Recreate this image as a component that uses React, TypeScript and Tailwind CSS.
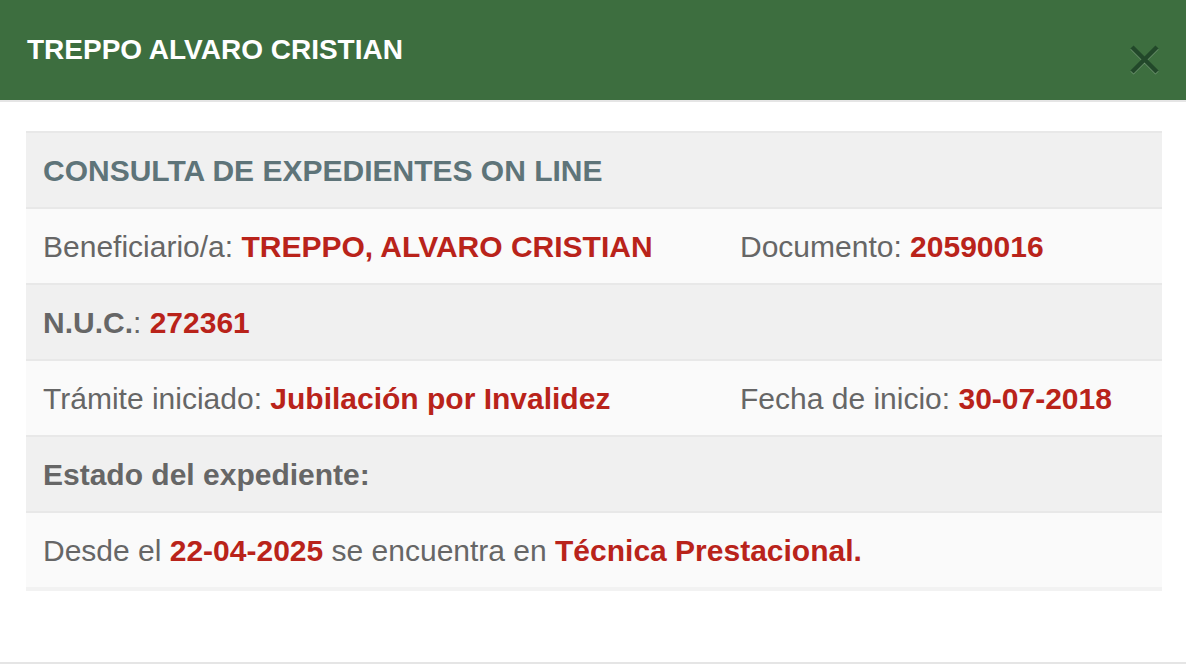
import React from "react";

function Val({ children }: { children: React.ReactNode }) {
  return <span className="font-bold text-[#b9231a]">{children}</span>;
}

export default function App() {
  return (
    <div
      className="w-[1186px] h-[666px] bg-white flex flex-col overflow-hidden"
      style={{ fontFamily: '"Liberation Sans", Arial, Helvetica, sans-serif' }}
    >
      <div className="h-[102px] bg-[#3d6e3f] border-b-2 border-[#e5e5e5] flex items-start justify-between pl-[27px] pr-[25px] shrink-0">
        <h1 className="mt-[33px] text-[28px] leading-[34px] font-bold text-white">TREPPO ALVARO CRISTIAN</h1>
        <button className="mt-[44px] w-[32px] h-[32px] flex items-center justify-center">
          <svg width="32" height="32" viewBox="0 0 32 32">
            <g stroke="#ffffff" strokeOpacity="0.25" strokeWidth="4.5" transform="translate(0,1)">
              <line x1="3" y1="3" x2="28" y2="28" />
              <line x1="28" y1="3" x2="3" y2="28" />
            </g>
            <g stroke="#22482a" strokeWidth="4.5">
              <line x1="3" y1="3" x2="28" y2="28" />
              <line x1="28" y1="3" x2="3" y2="28" />
            </g>
          </svg>
        </button>
      </div>

      <div className="flex-1 pl-[26px] pr-[24px] pt-[29px]">
        <div className="border-b-4 border-[#f2f2f2] text-[30px] text-[#666666]">
          <div className="h-[76px] border-t-2 border-[#e8e8e8] bg-[#f0f0f0] flex items-center px-[17px]">
            <span className="font-bold text-[#5e7479]">CONSULTA DE EXPEDIENTES ON LINE</span>
          </div>
          <div className="h-[76px] border-t-2 border-[#e8e8e8] bg-[#fafafa] grid grid-cols-[697px_1fr] items-center px-[17px]">
            <div>
              Beneficiario/a: <Val>TREPPO, ALVARO CRISTIAN</Val>
            </div>
            <div>
              Documento: <Val>20590016</Val>
            </div>
          </div>
          <div className="h-[76px] border-t-2 border-[#e8e8e8] bg-[#f0f0f0] flex items-center px-[17px]">
            <div>
              <span className="font-bold">N.U.C.</span>: <Val>272361</Val>
            </div>
          </div>
          <div className="h-[76px] border-t-2 border-[#e8e8e8] bg-[#fafafa] grid grid-cols-[697px_1fr] items-center px-[17px]">
            <div>
              Trámite iniciado: <Val>Jubilación por Invalidez</Val>
            </div>
            <div>
              Fecha de inicio: <Val>30-07-2018</Val>
            </div>
          </div>
          <div className="h-[76px] border-t-2 border-[#e8e8e8] bg-[#f0f0f0] flex items-center px-[17px]">
            <span className="font-bold">Estado del expediente:</span>
          </div>
          <div className="h-[76px] border-t-2 border-[#e8e8e8] bg-[#fafafa] flex items-center px-[17px]">
            <div>
              Desde el <Val>22-04-2025</Val> se encuentra en <Val>Técnica Prestacional.</Val>
            </div>
          </div>
        </div>
      </div>

      <div className="h-[4px] border-t-2 border-[#e5e5e5] shrink-0" />
    </div>
  );
}
